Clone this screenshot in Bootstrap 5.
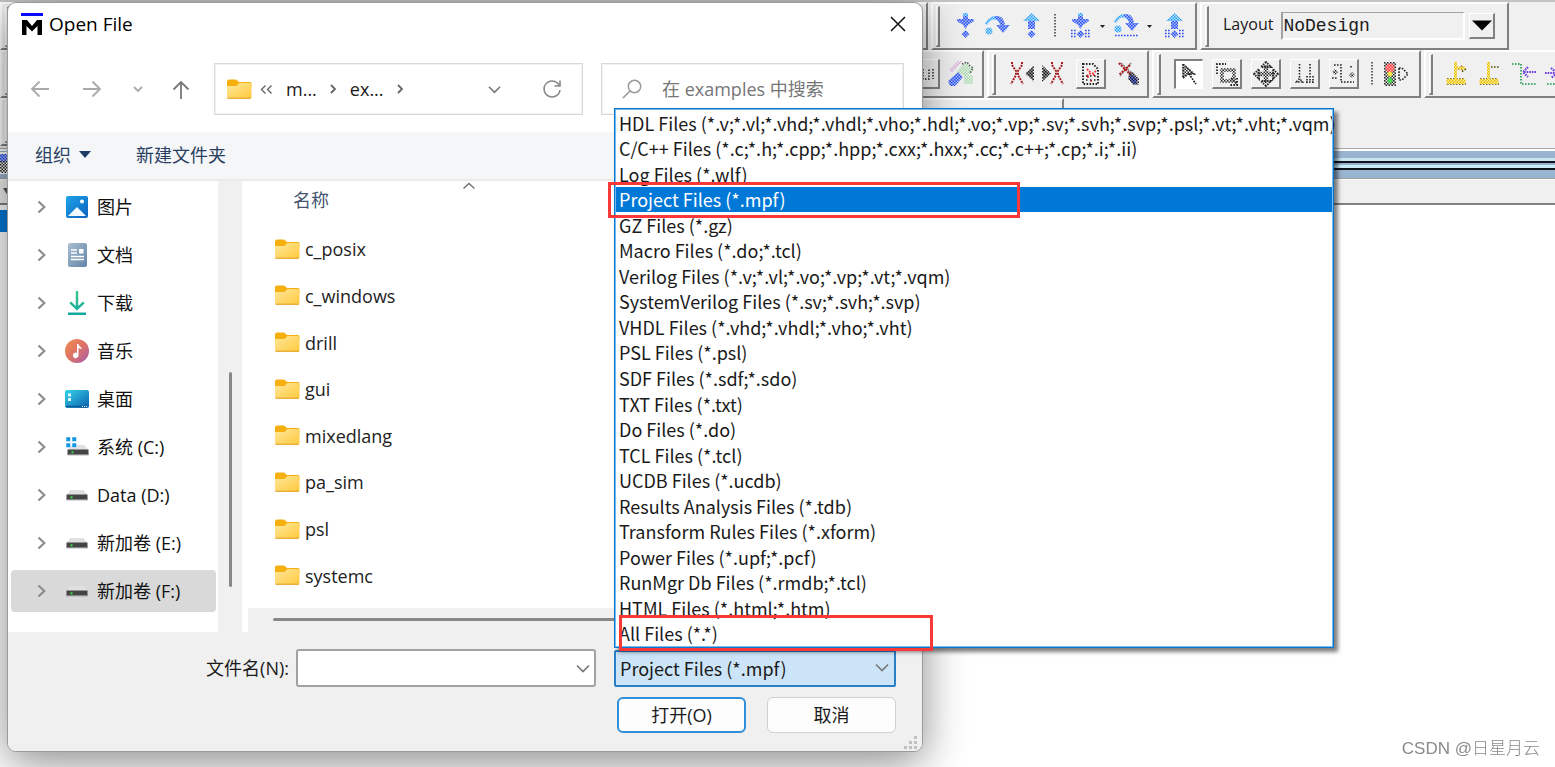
<!DOCTYPE html>
<html lang="zh-CN">
<head>
<meta charset="utf-8">
<meta name="viewport" content="width=device-width, initial-scale=1">
<title>Open File</title>
<link href="https://cdn.jsdelivr.net/npm/bootstrap@5.3.0/dist/css/bootstrap.min.css" rel="stylesheet">
<style>
  body { font-family: "Open Sans", "Noto Sans CJK SC", sans-serif; font-size: 18px; line-height: 24px; color: #1a1a1a; background: #fff; overflow: hidden; }
  ul { list-style: none; margin: 0; padding: 0; }
  button, input, select { font: inherit; color: inherit; }
  svg { display: block; flex: none; }
  .app { min-height: 100vh; }

  /* main window toolbars */
  .bars { background: #f0f0f0; border-top: 2px solid #c4c4c4; overflow: hidden; padding-bottom: 2px; }
  .bar-row { height: 48px; gap: 3px; }
  .tgroup { flex: none; height: 48px; border: solid; border-width: 2px; border-color: #fff #808080 #808080 #fff; display: flex; align-items: center; }
  .grip { width: 4px; height: 41px; border: solid; border-width: 1px 2px 2px 1px; border-color: #fff #808080 #808080 #fff; margin-left: 3px; flex: none; }
  .g-hidden1 { width: 928px; } .g-hidden2 { width: 984px; } .g-hidden3 { width: 1064px; }
  .gap-a { margin-left: 12px; }
  .tbtn { border: 0; background: none; padding: 0; display: flex; align-items: center; justify-content: center; height: 30px; flex: none; }
  .tbtn.raised { width: 30px; border: solid; border-width: 1px 2px 2px 1px; border-color: #fff #808080 #808080 #fff; }
  .tbtn.sunken { width: 29px; border: solid; border-width: 2px 1px 1px 2px; border-color: #808080 #fff #fff #808080; background: #fff; }
  .layout-label { font-size: 16px; margin: 0 8px 5px 14px; }
  .layout-box { width: 184px; height: 28px; border: solid; border-width: 1px 2px 2px 2px; border-color: #a0a0a0 #fff #fff #a0a0a0; background: #f0f0f0; font-family: "Liberation Mono", monospace; padding: 0; border-radius: 0; }
  .dock { border-top: 1px solid #a8a8a8; height: 32px; background: linear-gradient(#fff 0 2px, #99b4d1 2px 9px, #c8e4f0 9px 12px, #10151c 12px 14px, #99b4d1 14px 16px, #c8ecf8 16px 19px, #10151c 19px 21px, #99b4d1 21px 29px, #a0a0a0 29px 30px, #fff 30px); }
  .dock-head { height: 25px; background: #f0f0f0; border-bottom: 2px solid #808080; }
  .dock-sel { height: 22px; width: 300px; background: #0078d7; margin-top: 5px; }

  /* dialog */
  .dialog { position: absolute; left: 7px; top: 2px; width: calc(100% - 16px); max-width: 916px; border: 1px solid #9a9a9a; border-radius: 9px; background: #fff; box-shadow: 0 10px 44px rgba(0,0,0,.46); }
  .titlebar { height: 44px; padding: 0 14px 2px 13px; font-size: 19px; color: #000; gap: 6px; }
  .plain { border: 0; background: none; padding: 0; }
  .navrow { padding: 16px 18px 17px 22px; }
  .field { height: 52px; border: 1px solid #d9d9d9; outline: 1px solid #f2f2f2; outline-offset: -2px; }
  .addr { width: 369px; }
  .crumb { color: #1a1a1a; text-decoration: none; font-weight: 500; }
  .find input { border: 0; outline: 0; min-width: 0; background: none; }
  .find input::placeholder { color: #767676; opacity: 1; }
  .cmdbar { height: 49px; background: #f4f6f8; border-bottom: 2px solid #ebebeb; padding: 0 0 2px 27px; color: #2b3f63; gap: 45px; }
  .side { width: 210px; padding: 5px 2px 20px 3px; }
  .side ul { display: flex; flex-direction: column; gap: 6px; }
  .side a { display: flex; align-items: center; height: 42px; padding-left: 26px; border-radius: 4px; color: #111; text-decoration: none; }
  .side a.current { background: #d9d9d9; }
  .side .chev { margin-right: 18px; }
  .side .pic { width: 26px; margin-right: 7px; display: flex; justify-content: center; }
  .track { width: 24px; background: #f0f0f0; padding-bottom: 45px; }
  .thumb-v { width: 3px; height: 215px; background: #888; border-radius: 2px; }
  .files { margin-left: 6px; min-width: 0; }
  .colhead { height: 45px; padding: 7px 0 0 45px; color: #44546f; position: relative; }
  .colhead svg { position: absolute; left: 214px; top: 0; }
  .flist { height: 373px; padding-left: 27px; display: flex; flex-direction: column; }
  .flist li { flex: 1; display: flex; align-items: center; }
  .flist a { color: #222; text-decoration: none; display: flex; align-items: center; gap: 5px; }
  .track-h { height: 24px; background: #f0f0f0; padding: 10px 0 0 25px; }
  .thumb-h { height: 3px; background: #888; border-radius: 2px; }
  .foot { background: #f0f0f0; border-radius: 0 0 8px 8px; padding: 17px 26px 18px 26px; position: relative; }
  .combo { width: 300px; height: 38px; background: #fff; border: 2px solid #a2a2a2; border-radius: 3px; }
  .combo input { border: 0; outline: 0; min-width: 0; background: none; }
  .filter { position: relative; width: 282px; font-family: "Noto Sans CJK SC", sans-serif; }
  .filter select { width: 100%; height: 37px; margin-top: 1px; appearance: none; background: #cce4f7; border: 2px solid #2a7fc9; border-radius: 2px; padding: 0 30px 2px 4px; display: block; }
  .filter > svg { position: absolute; right: 7px; top: 14px; }
  .dlg-btn { width: 129px; height: 36px; border-radius: 6px; background: #fdfdfd; border: 1px solid #d0d0d0; padding: 0; }
  .dlg-btn.main { border: 2px solid #2f8fdb; }
  .sizer { position: absolute; right: 4px; bottom: 1px; }

  /* file type list lying over the dialog */
  .types { position: absolute; left: 0; bottom: 39px; width: 720px; height: 540px; border: 1px solid #0078d7; outline: 1px solid #7fb9e8; outline-offset: -2px; padding: 1px; background: #fff; box-shadow: 4px 4px 4px rgba(0,0,0,.5); z-index: 2; }
  .types ul { height: 100%; display: grid; grid-template-columns: 100%; grid-auto-rows: 1fr; }
  .types li { padding-left: 3px; white-space: nowrap; display: flex; align-items: center; min-height: 0; }
  .types li.picked { background: #0078d7; color: #fff; }
  .note { position: absolute; border: 3px solid #fb3838; height: 36px; z-index: 3; pointer-events: none; }
  .note-a { left: -7px; top: 73px; width: 412px; }
  .note-b { left: 4px; bottom: -4px; width: 314px; }
  .credit { position: fixed; right: 15px; bottom: 6px; font-size: 17px; color: #8a8a8a; font-family: "Liberation Sans", "Noto Sans CJK SC", sans-serif; font-weight: 300; }
</style>
<script src="https://cdn.jsdelivr.net/npm/bootstrap@5.3.0/dist/js/bootstrap.bundle.min.js"></script>
</head>
<body>
<svg width="0" height="0" class="position-absolute" aria-hidden="true">
  <defs>
    <pattern id="pB" width="3" height="3" patternUnits="userSpaceOnUse"><rect width="3" height="3" fill="#a9c4fb"/><path d="M0 0h1.5v1.5H0zM1.5 1.5H3V3H1.5z" fill="#2b47f0"/></pattern>
    <pattern id="pC" width="3" height="3" patternUnits="userSpaceOnUse"><rect width="3" height="3" fill="#b5e4ff"/><path d="M0 0h1.5v1.5H0zM1.5 1.5H3V3H1.5z" fill="#2f9df5"/></pattern>
    <pattern id="pK" width="3" height="3" patternUnits="userSpaceOnUse"><path d="M0 0h1.5v1.5H0zM1.5 1.5H3V3H1.5z" fill="#222"/></pattern>
    <pattern id="pR" width="3" height="3" patternUnits="userSpaceOnUse"><rect width="3" height="3" fill="#ffb0b0"/><path d="M0 0h1.5v1.5H0zM1.5 1.5H3V3H1.5z" fill="#f33"/></pattern>
    <pattern id="pG" width="3" height="3" patternUnits="userSpaceOnUse"><path d="M0 0h1.5v1.5H0zM1.5 1.5H3V3H1.5z" fill="#9fd8a4"/></pattern>
    <pattern id="pP" width="3" height="3" patternUnits="userSpaceOnUse"><path d="M0 0h1.5v1.5H0zM1.5 1.5H3V3H1.5z" fill="#d7a8d8"/></pattern>
    <pattern id="pY" width="3" height="3" patternUnits="userSpaceOnUse"><rect width="3" height="3" fill="#ffee9a"/><path d="M0 0h1.5v1.5H0zM1.5 1.5H3V3H1.5z" fill="#e8bd00"/></pattern>
    <linearGradient id="fold" x1="0" y1="0" x2="1" y2="1"><stop offset="0" stop-color="#ffe79b"/><stop offset="1" stop-color="#ffc93c"/></linearGradient>
    <linearGradient id="gPic" x1="0" y1="0" x2="1" y2="1"><stop offset="0" stop-color="#1fa4ea"/><stop offset="1" stop-color="#0b62bd"/></linearGradient>
    <linearGradient id="gDoc" x1="0" y1="0" x2="1" y2="1"><stop offset="0" stop-color="#a9bdd0"/><stop offset="1" stop-color="#6385a8"/></linearGradient>
    <linearGradient id="gDown" x1="0" y1="0" x2="0" y2="1"><stop offset="0" stop-color="#3ac98a"/><stop offset="1" stop-color="#10a7a0"/></linearGradient>
    <linearGradient id="gMus" x1="0" y1="0" x2="1" y2="1"><stop offset="0" stop-color="#f38c4f"/><stop offset=".5" stop-color="#dd7266"/><stop offset="1" stop-color="#a65bb0"/></linearGradient>
    <linearGradient id="gDesk" x1="0" y1="0" x2="1" y2="1"><stop offset="0" stop-color="#35d4ea"/><stop offset="1" stop-color="#0b5fae"/></linearGradient>
    <symbol id="folder" viewBox="0 0 25 21"><path d="M0 2.500A2 2 0 0 1 2 .5h7.200l2.800 2.600h11a1.500 1.500 0 0 1 1.500 1.500V8H0z" fill="#f5b010"/><path d="M0 7h9.500l3-3H23a1.500 1.500 0 0 1 1.500 1.500v12.700a1.800 1.800 0 0 1-1.800 1.800H1.800A1.800 1.800 0 0 1 0 18.200z" fill="url(#fold)"/><path d="M.5 19.200h23.500" stroke="#e0a030" stroke-width="1"/></symbol>
    <symbol id="chevR" viewBox="0 0 9 14"><path d="M1.500 1.500 7.300 7l-5.800 5.500" fill="none" stroke="#8c8c8c" stroke-width="2.200"/></symbol>
    <symbol id="chevD" viewBox="0 0 14 9"><path d="M1 1.500 7 7.500l6-6" fill="none" stroke="#777" stroke-width="1.700"/></symbol>
    <symbol id="drive" viewBox="0 0 22 12"><path d="M4.500 1h13l4 5H.5z" fill="#dfe0e2"/><path d="M.5 5.500h21V11H.5z" fill="#444"/><path d="M.5 10h21v1.300H.5z" fill="#888"/><rect x="4.500" y="7.300" width="2" height="2" fill="#35dc4b"/></symbol>
    <symbol id="stepDown" viewBox="0 0 20 26"><path d="M7 0h5v6H7z" fill="url(#pC)"/><path d="M7 3h5v3h6v2l-6 4-2.500 4L7 12 1 8V6h6z" fill="url(#pB)"/><path d="m9.500 17 4 4-4 4-4-4z" fill="url(#pB)"/></symbol>
    <symbol id="stepUp" viewBox="0 0 20 26"><path d="M9.500 0 18 8h-5v8H6V8H1z" fill="url(#pC)"/><path d="M6 8h7v8H6zM9.500 17l4 4-4 4-4-4z" fill="url(#pB)"/></symbol>
    <symbol id="stepOver" viewBox="0 0 26 22"><path d="M1 9C4 1 14-2 19 5l-3 4C12 3 8 3 3 10z" fill="url(#pC)"/><path d="M12 1c7 0 8 4 9 9h5l-7 8-7-8h4C15 6 14 4 10 3z" fill="url(#pB)"/><circle cx="5" cy="16" r="3.500" fill="url(#pC)"/></symbol>
    <symbol id="grid" viewBox="0 0 22 9"><path d="M1 1.500h6M1 4.500h6M1 7.500h6M15 1.500h6M15 4.500h6M15 7.500h6" stroke="#2b47f0" stroke-width="1.600" stroke-dasharray="1.600 1.400"/></symbol>
  </defs>
</svg>

<main class="app">
  <div class="bars">
    <div class="d-flex bar-row">
      <div class="tgroup g-hidden1"><span class="grip"></span></div>
      <div class="tgroup" style="width:266px">
        <span class="grip"></span>
        <button class="tbtn ms-3" aria-label="Step into"><svg width="20" height="26"><use href="#stepDown"/></svg></button>
        <button class="tbtn ms-2" aria-label="Step over"><svg width="26" height="22"><use href="#stepOver"/></svg></button>
        <button class="tbtn gap-a" aria-label="Step out"><svg width="20" height="26"><use href="#stepUp"/></svg></button>
        <svg class="gap-a" width="2" height="24"><path d="M1 0v24" stroke="#333" stroke-width="1.500" stroke-dasharray="1.500 1.500"/></svg>
        <button class="tbtn" style="margin-left:14px" aria-label="Step into current"><svg width="22" height="26"><use href="#stepDown" x="1" width="20" height="26"/><use href="#grid" y="16" width="22" height="9"/></svg></button>
        <svg class="ms-2" width="5" height="5"><path d="M0 1h5L2.500 4z" fill="#222"/></svg>
        <button class="tbtn ms-2" aria-label="Step over current"><svg width="26" height="26"><use href="#stepOver" width="26" height="22"/><path d="M2 22.500h24" stroke="#2b47f0" stroke-width="1.600" stroke-dasharray="1.600 1.400"/></svg></button>
        <svg class="ms-2" width="5" height="5"><path d="M0 1h5L2.500 4z" fill="#222"/></svg>
        <button class="tbtn gap-a" aria-label="Step out current"><svg width="22" height="26"><use href="#stepUp" x="1" width="20" height="26"/><use href="#grid" y="16" width="22" height="9"/></svg></button>
      </div>
      <div class="tgroup" style="width:309px">
        <span class="grip"></span>
        <label class="layout-label" for="layoutBox">Layout</label>
        <input id="layoutBox" class="layout-box" value="NoDesign">
        <button class="tbtn raised ms-1" style="width:26px;height:26px" aria-label="Choose layout"><svg width="20" height="11"><path d="M0 .5h20L10 10.500z" fill="#000"/></svg></button>
      </div>
    </div>
    <div class="d-flex bar-row">
      <div class="tgroup g-hidden2 justify-content-between">
        <span class="grip"></span>
        <span class="d-flex me-2"><button class="tbtn raised" aria-label="Wave"><svg width="22" height="12"><path d="M2 11V1m4 10h-4M9 1v10h6V1m4 0v10" fill="none" stroke="#222" stroke-width="1.500" stroke-dasharray="1.500 1.500"/></svg></button>
        <button class="tbtn ms-2" aria-label="Tools"><svg width="26" height="26"><path d="M1 9 10 0h4L4 12z" fill="url(#pP)"/><path d="M16 14h9v9h-9z" fill="url(#pG)"/><path d="M9 11 17 1l4 2 1 4 4-1-2 6-6 3z" fill="url(#pG)"/><path d="M14 3l5-2 2 3 4 3-3 5" fill="none" stroke="#555" stroke-width="1.500" stroke-dasharray="1.500 1.500"/><path d="m0 20 10-9 5 5-8 9H2z" fill="url(#pB)"/></svg></button></span>
      </div>
      <div class="tgroup" style="width:162px">
        <span class="grip"></span>
        <button class="tbtn" style="margin-left:14px" aria-label="Previous mismatch"><svg width="24" height="24"><path d="M2 0v3l4 6v4l-5 9M12 0v3L8 9v4l5 9" fill="none" stroke="#a51d22" stroke-width="2" stroke-dasharray="2 1"/><path d="M24 3v17l-9-8.500z" fill="url(#pK)"/><path d="M23 5v13l-7-6.500z" fill="#222" opacity=".45"/></svg></button>
        <button class="tbtn ms-2" aria-label="Next mismatch"><svg width="24" height="24"><path d="M10 0v3l4 6v4l-5 9M20 0v3l-4 6v4l5 9" fill="none" stroke="#a51d22" stroke-width="2" stroke-dasharray="2 1"/><path d="M0 3v17l9-8.500z" fill="url(#pK)"/><path d="M1 5v13l7-6.500z" fill="#222" opacity=".45"/></svg></button>
        <button class="tbtn raised" style="margin-left:10px" aria-label="Coverage report"><svg width="20" height="22"><path d="M2 1h10l5 5v15H2z" fill="none" stroke="#222" stroke-width="2" stroke-dasharray="1.500 1.500"/><path d="m6 6 4 4-4 3m9-5-4 3 4 2m-9 1h2m2 3v3" fill="none" stroke="#f33" stroke-width="1.800" stroke-dasharray="1.800 1.200"/><path d="M5 13h11M5 17h11" stroke="#222" stroke-width="1.500" stroke-dasharray="1.500 2.500"/></svg></button>
        <button class="tbtn gap-a" aria-label="Clear"><svg width="22" height="24"><path d="m3 1 13 12M13 1 2 14" stroke="#888" stroke-width="1.500" stroke-dasharray="2 1"/><path d="m1 1 13 13M12 3 1 13" stroke="#b01c22" stroke-width="2.200" stroke-dasharray="2 1"/><path d="M12 13h3l4 4v5h-4l-4-5z" fill="#3350f0" opacity=".8"/><path d="M11 10h4l6 6v7h-6l-5-6z" fill="url(#pK)"/></svg></button>
      </div>
      <div class="tgroup" style="width:269px">
        <span class="grip"></span>
        <button class="tbtn sunken" style="margin-left:13px" aria-label="Select"><svg width="18" height="22"><path d="M3 0v14l4-4 7 0z" fill="url(#pK)"/><path d="m3 0 11 10h-5l7 10M3 0v14l5-4" fill="none" stroke="#222" stroke-width="1.700" stroke-dasharray="1.800 1"/></svg></button>
        <button class="tbtn raised" style="margin-left:9px" aria-label="Zoom"><svg width="24" height="24"><path d="M2 12V2h9" fill="none" stroke="#222" stroke-width="1.800" stroke-dasharray="1.600 1.400"/><path d="M7 8h12v11H7z" fill="none" stroke="url(#pK)" stroke-width="3.500"/><path d="m16 16 6 6m0-6v7h-7" fill="none" stroke="#222" stroke-width="2" stroke-dasharray="1.600 1.400"/></svg></button>
        <button class="tbtn raised" style="margin-left:9px" aria-label="Pan"><svg width="26" height="26"><path d="M13 1 8 6h10zM13 25l-5-5h10zM1 13l5-5v10zM25 13l-5-5v10z" fill="none" stroke="#222" stroke-width="1.800" stroke-dasharray="1.600 1"/><path d="M13 4v18M4 13h18" stroke="url(#pK)" stroke-width="4.500"/></svg></button>
        <button class="tbtn raised" style="margin-left:9px" aria-label="Edit wave"><svg width="20" height="20"><path d="M4.500 0v14m-3 4 3-3.500 3 3.500zM15 0v18M12 12v7m6-7v7m-7-1h8" fill="none" stroke="#222" stroke-width="1.600" stroke-dasharray="1.600 1.400"/></svg></button>
        <button class="tbtn raised" style="margin-left:9px" aria-label="Signal edges"><svg width="24" height="20"><path d="M2 1h7v17h13M0 14h6M19 2v3" fill="none" stroke="#222" stroke-width="1.600" stroke-dasharray="1.600 1.400"/><path d="m3 5 3 3-3 3-3-3zM20 8l3 3-3 3-3-3z" fill="url(#pK)"/></svg></button>
        <svg style="margin-left:12px" width="2" height="24"><path d="M1 0v24" stroke="#333" stroke-width="1.500" stroke-dasharray="1.500 1.500"/></svg>
        <button class="tbtn" style="margin-left:11px" aria-label="Run until"><svg width="25" height="24"><rect width="12" height="24" fill="url(#pK)"/><circle cx="6" cy="6" r="4.500" fill="url(#pR)"/><path d="m6 9 3 3-3 3-3-3z" fill="#ffe73c"/><path d="m6 15 3 3.500L6 22l-3-3.500z" fill="#45dc52"/><path d="M15 6h3l6 6-6 6h-3z" fill="none" stroke="#222" stroke-width="1.600" stroke-dasharray="1.600 1.400"/></svg></button>
      </div>
      <div class="tgroup" style="width:300px">
        <span class="grip"></span>
        <button class="tbtn" style="margin-left:13px" aria-label="Add cursor"><svg width="22" height="24"><path d="M9 0v17M1 17h17M1 22h19M9 7h11m-5-3 5 3-5 3" fill="none" stroke="#5c4a00" stroke-width="1.600" stroke-dasharray="1.600 1.400"/><path d="M9.500 0v17M2 18.500h16v2H2zM11 6h8" fill="none" stroke="url(#pY)" stroke-width="3"/></svg></button>
        <button class="tbtn" style="margin-left:11px" aria-label="Remove cursor"><svg width="22" height="24"><path d="M9 0v17M1 17h17M1 22h19M9 5h11" fill="none" stroke="#5c4a00" stroke-width="1.600" stroke-dasharray="1.600 1.400"/><path d="M9.500 0v17M2 18.500h16v2H2z" fill="none" stroke="url(#pY)" stroke-width="3"/></svg></button>
        <button class="tbtn" style="margin-left:11px" aria-label="Previous edge"><svg width="25" height="24"><path d="M0 2h9v20h16" fill="none" stroke="#179145" stroke-width="1.600" stroke-dasharray="1.600 1.400"/><path d="M12 10h12m-8-5-5 5 5 5" fill="none" stroke="#6a3be0" stroke-width="2.200" stroke-dasharray="1.600 1"/></svg></button>
        <button class="tbtn" style="margin-left:8px" aria-label="Next edge"><svg width="25" height="24"><path d="M2 22h9V2h14" fill="none" stroke="#179145" stroke-width="1.600" stroke-dasharray="1.600 1.400"/><path d="M0 11h12M6 6l6 5-6 5" fill="none" stroke="#6a3be0" stroke-width="2.200" stroke-dasharray="1.600 1"/></svg></button>
      </div>
    </div>
    <div class="d-flex bar-row"><div class="tgroup g-hidden3"><span class="grip"></span></div></div>
  </div>
  <div class="dock"><svg width="10" height="28"><path d="M0 3h8v22H0z" fill="#fff"/><path d="M0 5h8v8H0z" fill="url(#pB)"/><path d="M0 12h8v12H0z" fill="url(#pK)"/></svg></div>
  <div class="dock-head d-flex align-items-center"><svg width="12" height="10"><path d="M3 1h9l-4 8z" fill="#555"/></svg></div>
  <div class="dock-sel"></div>

  <section class="dialog" role="dialog" aria-label="Open File">
    <div class="titlebar d-flex align-items-center">
      <svg width="22" height="22"><path d="M0 1.500h22" stroke="#0a0aff" stroke-width="3"/><path d="M1 22V7h5l5 6 5-6h5v15h-4.500v-9L11 18.500 5.500 13v9z" fill="#000"/></svg>
      <span class="me-auto">Open File</span>
      <button class="plain" aria-label="Close"><svg width="20" height="20"><path d="m3 3 14 14M17 3 3 17" stroke="#111" stroke-width="1.500"/></svg></button>
    </div>
    <div class="navrow d-flex align-items-center">
      <button class="plain" aria-label="Back"><svg width="19" height="18"><path d="M19 9H2m7.500-7.500L2 9l7.500 7.500" fill="none" stroke="#aaa" stroke-width="1.800"/></svg></button>
      <button class="plain" style="margin-left:34px" aria-label="Forward"><svg width="19" height="18"><path d="M0 9h17M9.500 1.500 17 9l-7.500 7.500" fill="none" stroke="#aaa" stroke-width="1.800"/></svg></button>
      <button class="plain" style="margin-left:31px" aria-label="Recent locations"><svg width="10" height="7"><path d="m1 1 4 4 4-4" fill="none" stroke="#aaa" stroke-width="1.800"/></svg></button>
      <button class="plain" style="margin-left:29px" aria-label="Up"><svg width="18" height="19"><path d="M9 19V2M1.500 9.500 9 2l7.500 7.500" fill="none" stroke="#777" stroke-width="1.800"/></svg></button>
      <div class="field addr d-flex align-items-center flex-shrink-0" style="margin-left:24px;padding:0 20px 0 12px">
        <svg width="25" height="21"><use href="#folder"/></svg>
        <svg style="margin-left:8px" width="13" height="9"><path d="M5.500.5 1.500 4.500l4 4M11.500.5l-4 4 4 4" fill="none" stroke="#666" stroke-width="1.400"/></svg>
        <a class="crumb" style="margin-left:13px" href="#">m...</a>
        <svg style="margin-left:13px" width="7" height="10"><path d="m1 1 4 4-4 4" fill="none" stroke="#666" stroke-width="1.800"/></svg>
        <a class="crumb" style="margin-left:13px" href="#">ex...</a>
        <svg class="me-auto" style="margin-left:13px" width="7" height="10"><path d="m1 1 4 4-4 4" fill="none" stroke="#666" stroke-width="1.800"/></svg>
        <button class="plain" aria-label="Previous locations"><svg width="13" height="9"><use href="#chevD"/></svg></button>
        <button class="plain" style="margin-left:41px" aria-label="Refresh"><svg width="20" height="20"><path d="M17.500 7A8 8 0 1 0 18 11M18 1.500V7h-5.500" fill="none" stroke="#888" stroke-width="1.600"/></svg></button>
      </div>
      <div class="field find flex-grow-1 d-flex align-items-center" style="margin-left:18px;padding-left:20px">
        <svg width="20" height="20"><circle cx="12.500" cy="7.500" r="6.200" fill="none" stroke="#999" stroke-width="1.500"/><path d="m8 12-7 7" stroke="#999" stroke-width="1.600"/></svg>
        <input class="flex-grow-1" style="margin-left:18px" type="search" aria-label="Search" placeholder="在 examples 中搜索">
      </div>
    </div>
    <div class="cmdbar d-flex align-items-center">
      <button class="plain d-flex align-items-center">组织<svg class="ms-2" width="12" height="7"><path d="M0 0h12L6 7z" fill="#1d3b63"/></svg></button>
      <button class="plain">新建文件夹</button>
    </div>
    <div class="d-flex">
      <nav class="side flex-shrink-0" aria-label="Locations"><ul>
        <li><a href="#"><svg class="chev" width="9" height="14"><use href="#chevR"/></svg><span class="pic"><svg width="22" height="22"><rect width="22" height="22" rx="2" fill="url(#gPic)"/><path d="m2 20 9-9 9 9z" fill="#f2f8ff"/><circle cx="16" cy="5.500" r="2" fill="#fff"/></svg></span>图片</a></li>
        <li><a href="#"><svg class="chev" width="9" height="14"><use href="#chevR"/></svg><span class="pic"><svg width="19" height="24"><rect width="19" height="24" rx="2" fill="url(#gDoc)"/><path d="M3 7h6M3 10h6M3 13.500h13M3 16.500h13" stroke="#fff" stroke-width="1.400"/><path d="M11 6h4.500v4.500H11z" fill="#fff"/></svg></span>文档</a></li>
        <li><a href="#"><svg class="chev" width="9" height="14"><use href="#chevR"/></svg><span class="pic"><svg width="20" height="24"><path d="M8.800 0h2.400v15L16 10.500l1.700 1.700L10 19.500l-7.700-7.300L4 10.500 8.800 15zM1 21.500h18V24H1z" fill="url(#gDown)"/></svg></span>下载</a></li>
        <li><a href="#"><svg class="chev" width="9" height="14"><use href="#chevR"/></svg><span class="pic"><svg width="24" height="24"><circle cx="12" cy="12" r="12" fill="url(#gMus)"/><path d="M12 5h1.500c.3 2 1.500 3 3 3.500V10c-1.200 0-2.200-.5-3-1.200v7.700a2.800 2.800 0 1 1-1.500-2.600z" fill="#fff"/></svg></span>音乐</a></li>
        <li><a href="#"><svg class="chev" width="9" height="14"><use href="#chevR"/></svg><span class="pic"><svg width="24" height="18"><rect width="24" height="18" rx="2" fill="url(#gDesk)"/><path d="M3 3.500h3v3H3zM3 8h3v3H3z" fill="#dffaff"/><path d="M1 16.500h22" stroke="#0c5a96" stroke-width="1.500"/><path d="M17 16.500h5" stroke="#fff" stroke-dasharray="1 1"/></svg></span>桌面</a></li>
        <li><a href="#"><svg class="chev" width="9" height="14"><use href="#chevR"/></svg><span class="pic"><svg width="25" height="22"><use href="#drive" x="2" y="8" width="22" height="12"/><path d="M1 1h4.500v4.500H1zM7 1h4.500v4.500H7zM1 7h4.500v4.500H1zM7 7h4.500v4.500H7z" fill="#1498e6" stroke="#fff" stroke-width=".5"/></svg></span>系统 (C:)</a></li>
        <li><a href="#"><svg class="chev" width="9" height="14"><use href="#chevR"/></svg><span class="pic"><svg width="22" height="12"><use href="#drive"/></svg></span>Data (D:)</a></li>
        <li><a href="#"><svg class="chev" width="9" height="14"><use href="#chevR"/></svg><span class="pic"><svg width="22" height="12"><use href="#drive"/></svg></span>新加卷 (E:)</a></li>
        <li><a href="#" class="current"><svg class="chev" width="9" height="14"><use href="#chevR"/></svg><span class="pic"><svg width="22" height="12"><use href="#drive"/></svg></span>新加卷 (F:)</a></li>
      </ul></nav>
      <div class="track d-flex align-items-end justify-content-center flex-shrink-0"><div class="thumb-v"></div></div>
      <div class="files flex-grow-1 d-flex flex-column">
        <div class="colhead">名称<svg width="14" height="9"><path d="m1.500 7.500 5.500-5 5.500 5" fill="none" stroke="#777" stroke-width="1.600"/></svg></div>
        <ul class="flist">
          <li><a href="#"><svg width="25" height="21"><use href="#folder"/></svg>c_posix</a></li>
          <li><a href="#"><svg width="25" height="21"><use href="#folder"/></svg>c_windows</a></li>
          <li><a href="#"><svg width="25" height="21"><use href="#folder"/></svg>drill</a></li>
          <li><a href="#"><svg width="25" height="21"><use href="#folder"/></svg>gui</a></li>
          <li><a href="#"><svg width="25" height="21"><use href="#folder"/></svg>mixedlang</a></li>
          <li><a href="#"><svg width="25" height="21"><use href="#folder"/></svg>pa_sim</a></li>
          <li><a href="#"><svg width="25" height="21"><use href="#folder"/></svg>psl</a></li>
          <li><a href="#"><svg width="25" height="21"><use href="#folder"/></svg>systemc</a></li>
        </ul>
        <div class="track-h mt-auto"><div class="thumb-h"></div></div>
      </div>
    </div>
    <div class="foot">
      <div class="d-flex justify-content-end align-items-center">
        <label for="fname" style="margin-right:7px">文件名(N):</label>
        <div class="combo d-flex align-items-center"><input id="fname" class="flex-grow-1" type="text"><button class="plain me-1" aria-label="Show names"><svg width="14" height="9"><use href="#chevD"/></svg></button></div>
        <div class="filter" style="margin-left:18px">
          <select aria-label="File type"><option>Project Files (*.mpf)</option></select>
          <svg width="14" height="9"><use href="#chevD"/></svg>
          <div class="types">
            <ul role="listbox" aria-label="File types">
              <li role="option">HDL Files (*.v;*.vl;*.vhd;*.vhdl;*.vho;*.hdl;*.vo;*.vp;*.sv;*.svh;*.svp;*.psl;*.vt;*.vht;*.vqm)</li>
              <li role="option">C/C++ Files (*.c;*.h;*.cpp;*.hpp;*.cxx;*.hxx;*.cc;*.c++;*.cp;*.i;*.ii)</li>
              <li role="option">Log Files (*.wlf)</li>
              <li role="option" aria-selected="true" class="picked">Project Files (*.mpf)</li>
              <li role="option">GZ Files (*.gz)</li>
              <li role="option">Macro Files (*.do;*.tcl)</li>
              <li role="option">Verilog Files (*.v;*.vl;*.vo;*.vp;*.vt;*.vqm)</li>
              <li role="option">SystemVerilog Files (*.sv;*.svh;*.svp)</li>
              <li role="option">VHDL Files (*.vhd;*.vhdl;*.vho;*.vht)</li>
              <li role="option">PSL Files (*.psl)</li>
              <li role="option">SDF Files (*.sdf;*.sdo)</li>
              <li role="option">TXT Files (*.txt)</li>
              <li role="option">Do Files (*.do)</li>
              <li role="option">TCL Files (*.tcl)</li>
              <li role="option">UCDB Files (*.ucdb)</li>
              <li role="option">Results Analysis Files (*.tdb)</li>
              <li role="option">Transform Rules Files (*.xform)</li>
              <li role="option">Power Files (*.upf;*.pcf)</li>
              <li role="option">RunMgr Db Files (*.rmdb;*.tcl)</li>
              <li role="option">HTML Files (*.html;*.htm)</li>
              <li role="option">All Files (*.*)</li>
            </ul>
            <div class="note note-a"></div>
            <div class="note note-b"></div>
          </div>
        </div>
      </div>
      <div class="d-flex justify-content-end" style="gap:21px;margin-top:10px">
        <button class="dlg-btn main">打开(O)</button>
        <button class="dlg-btn">取消</button>
      </div>
      <svg class="sizer" width="14" height="14"><path d="M10 0h3v3h-3zM10 5h3v3h-3zM10 10h3v3h-3zM5 5h3v3H5zM5 10h3v3H5zM0 10h3v3H0z" fill="#c0c0c0"/></svg>
    </div>
  </section>
  <div class="credit">CSDN @日星月云</div>
</main>
</body>
</html>
